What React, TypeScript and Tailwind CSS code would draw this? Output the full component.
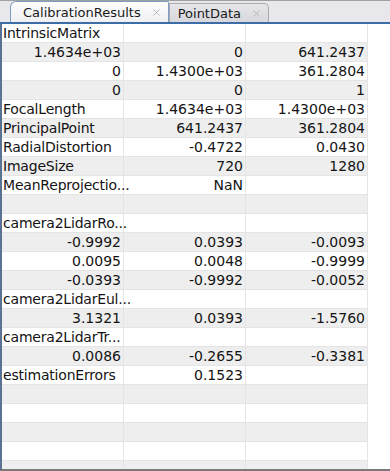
import { X } from "lucide-react";

type Row = [string, string, string];

const rows: Row[] = [
  ["IntrinsicMatrix", "", ""],
  ["1.4634e+03", "0", "641.2437"],
  ["0", "1.4300e+03", "361.2804"],
  ["0", "0", "1"],
  ["FocalLength", "1.4634e+03", "1.4300e+03"],
  ["PrincipalPoint", "641.2437", "361.2804"],
  ["RadialDistortion", "-0.4722", "0.0430"],
  ["ImageSize", "720", "1280"],
  ["MeanReprojectio...", "NaN", ""],
  ["", "", ""],
  ["camera2LidarRo...", "", ""],
  ["-0.9992", "0.0393", "-0.0093"],
  ["0.0095", "0.0048", "-0.9999"],
  ["-0.0393", "-0.9992", "-0.0052"],
  ["camera2LidarEul...", "", ""],
  ["3.1321", "0.0393", "-1.5760"],
  ["camera2LidarTr...", "", ""],
  ["0.0086", "-0.2655", "-0.3381"],
  ["estimationErrors", "0.1523", ""],
  ["", "", ""],
  ["", "", ""],
  ["", "", ""],
  ["", "", ""],
  ["", "", ""],
];

// text cells are labels (left), numbers right-aligned
const isLabel = (s: string) => /^[A-Za-z]/.test(s) && s !== "NaN";

function Tab({ label, active }: { label: string; active?: boolean }) {
  return (
    <div
      className={
        active
          ? "h-[21px] flex items-center gap-[10px] pl-[12px] pr-[6px] bg-gradient-to-b from-[#fdfdfe] to-[#f0f0f3] border border-b-0 border-[#7f9cc4] rounded-tl-[6px] rounded-tr-[2px]"
          : "h-[19px] flex items-center gap-[10px] pl-[8px] pr-[6px] bg-gradient-to-b from-[#e6e6ea] to-[#d8d8dc] border border-b-0 border-[#a9a9ae] rounded-tr-[5px] rounded-tl-[1px]"
      }
    >
      <span className="text-[13px] text-[#1a1a1a] leading-none">{label}</span>
      <X size={11} strokeWidth={2} className="text-[#b4b4b8]" />
    </div>
  );
}

export default function App() {
  return (
    <div
      className="w-[390px] h-[471px] bg-white overflow-hidden flex flex-col"
      style={{ fontFamily: '"DejaVu Sans", sans-serif' }}
    >
      {/* Tab bar */}
      <div className="h-[24px] shrink-0 bg-[#e8e8ec] border-t border-[#a0a0a0] flex flex-col">
        <div className="flex-1 flex items-end pl-[10px]">
          <Tab label="CalibrationResults" active />
          <Tab label="PointData" />
        </div>
        <div className="h-[2px] bg-[#3d6da6]" />
      </div>

      {/* Table */}
      <div className="flex-1 flex border-l-2 border-[#5a7395] border-b-2 border-b-[#7a7a7a] min-h-0 overflow-hidden">
        <div className="flex flex-col">
          {rows.map((r, i) => (
            <div
              key={i}
              className={`grid grid-cols-[122px_122px_122px] h-[19px] shrink-0 ${
                i % 2 === 1 ? "bg-[#eeeeee]" : "bg-white"
              }`}
            >
              {r.map((c, j) => (
                <div
                  key={j}
                  className={`border-r border-b border-[#e4e4e4] text-[14px] leading-[18px] text-[#141414] whitespace-nowrap ${
                    isLabel(c) ? "text-left pl-[1px] tracking-[-0.2px]" : "text-right pr-[2px]"
                  }`}
                >
                  {c}
                </div>
              ))}
            </div>
          ))}
        </div>
        <div className="flex-1 bg-white" />
      </div>
    </div>
  );
}
